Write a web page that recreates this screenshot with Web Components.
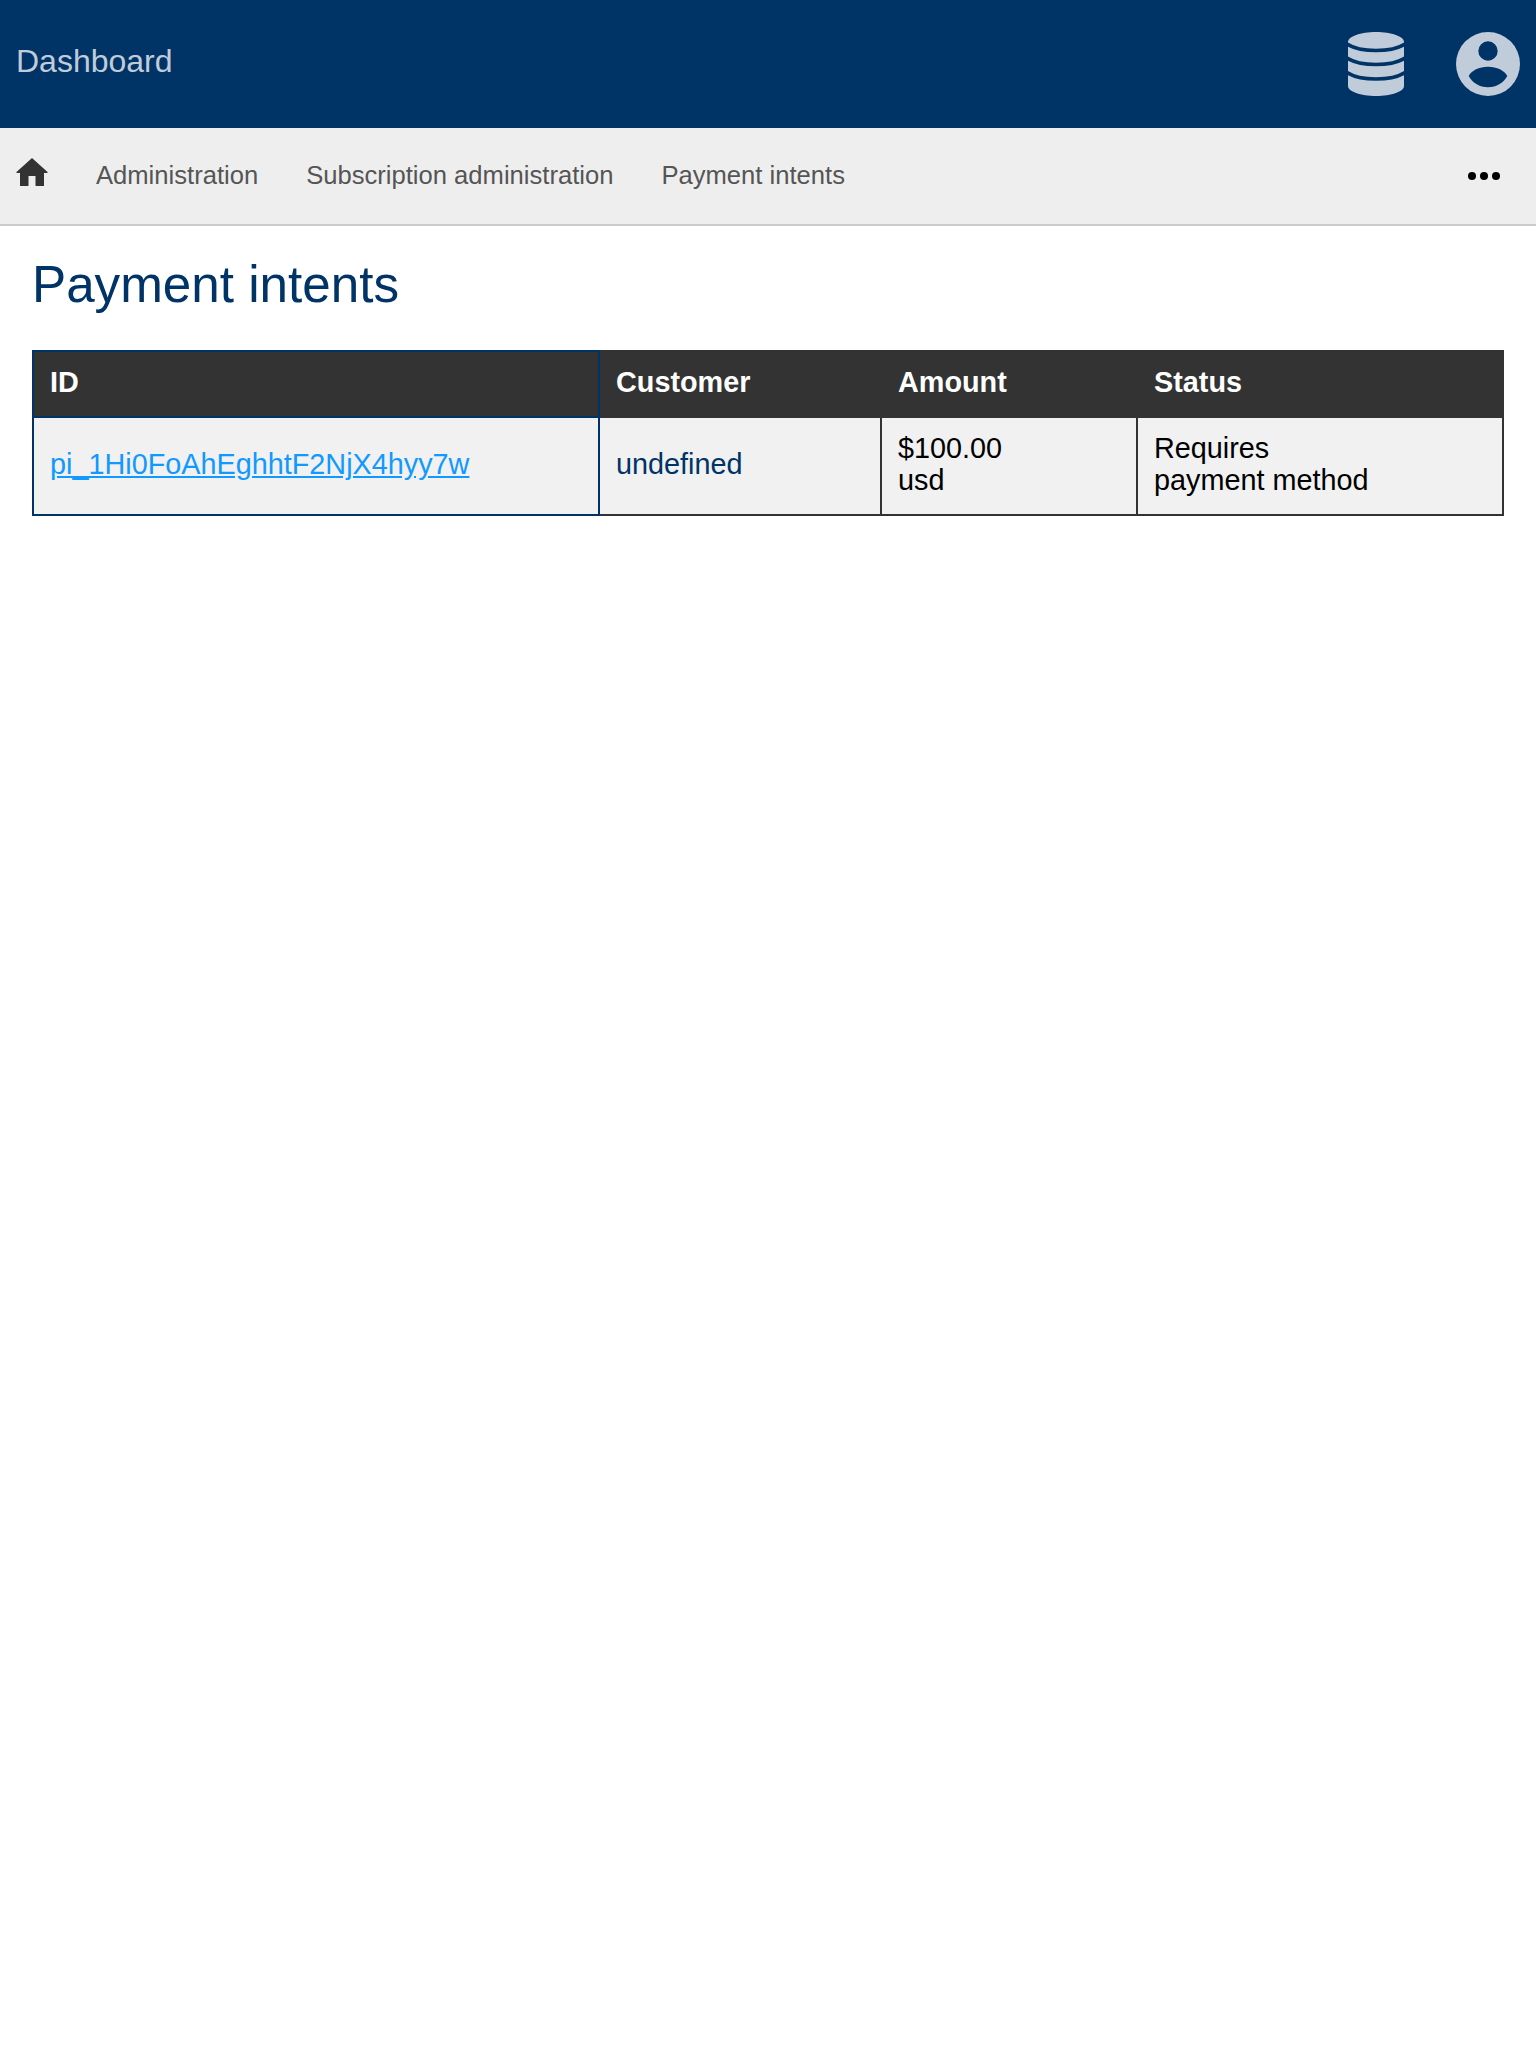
<!DOCTYPE html>
<html>
<head>
<meta charset="utf-8">
<title>Payment intents</title>
<style>
  html, body { margin: 0; padding: 0; background: #fff; font-family: "Liberation Sans", Arial, sans-serif; }
</style>
</head>
<body>
<app-header></app-header>
<app-nav></app-nav>
<payment-page></payment-page>

<script>
const headerTemplate = document.createElement('template');
headerTemplate.innerHTML = `
  <style>
    :host {
      display: flex;
      align-items: center;
      height: 128px;
      padding: 0 16px;
      box-sizing: border-box;
      background: #003366;
      color: #c0ccda;
    }
    .brand {
      flex: 1;
      font-size: 32px;
      margin-bottom: 5px;
    }
    svg { display: block; }
    .db { margin-right: 52px; }
    .db .bands { fill: none; stroke: #003366; stroke-width: 3.600; }
    .fill { fill: #c0ccd9; }
  </style>
  <div class="brand">Dashboard</div>
  <svg class="db" width="56" height="64" viewBox="0 0 56 64">
    <path class="fill" d="M0 10C0 4.500 12.500 0 28 0S56 4.500 56 10V54C56 59.500 43.500 64 28 64S0 59.500 0 54Z"/>
    <g class="bands">
      <path d="M-1 12C6 16.500 16 18.500 28 18.500S50 16.500 57 12"/>
      <path d="M-1 26C6 30.500 16 32.500 28 32.500S50 30.500 57 26"/>
      <path d="M-1 40.500C6 45 16 47 28 47S50 45 57 40.500"/>
    </g>
  </svg>
  <svg width="64" height="64" viewBox="0 0 64 64"><path class="fill" fill-rule="evenodd" d="M32 0a32 32 0 1 1 0 64a32 32 0 0 1 0-64zM32 9.300a9.700 9.700 0 1 0 0 19.400a9.700 9.700 0 1 0 0-19.400zM12.700 44C15.500 38.500 23 34.700 32 34.700S48.500 38.500 51.300 44C48 50.500 40.500 55.300 32 55.300S16 50.500 12.700 44Z"/></svg>
`;

class AppHeader extends HTMLElement {
  constructor() {
    super();
    this.attachShadow({ mode: 'open' });
    this.shadowRoot.appendChild(headerTemplate.content.cloneNode(true));
  }
}
window.customElements.define('app-header', AppHeader);

const navTemplate = document.createElement('template');
navTemplate.innerHTML = `
  <style>
    :host {
      display: flex;
      align-items: center;
      height: 98px;
      padding: 0 16px;
      box-sizing: border-box;
      background: #eeeeee;
      border-bottom: 2px solid #cccccc;
      color: #555555;
      font-size: 25.600px;
    }
    .home { display: block; fill: #333333; margin-right: 48px; margin-bottom: 8px; }
    a { color: inherit; text-decoration: none; margin-right: 48px; margin-bottom: 2px; }
    .more { display: block; margin-left: auto; margin-right: 20px; fill: #000; }
  </style>
  <svg class="home" width="32" height="28" viewBox="0 0 32 28"><path d="M16 0L31.500 14V15H28V28H19.500V18H12.500V28H4V15H.5V14Z"/></svg>
  <a>Administration</a>
  <a>Subscription administration</a>
  <a>Payment intents</a>
  <svg class="more" width="32" height="8" viewBox="0 0 32 8"><circle cx="4" cy="4" r="4"/><circle cx="16" cy="4" r="4"/><circle cx="28" cy="4" r="4"/></svg>
`;

class AppNav extends HTMLElement {
  constructor() {
    super();
    this.attachShadow({ mode: 'open' });
    this.shadowRoot.appendChild(navTemplate.content.cloneNode(true));
  }
}
window.customElements.define('app-nav', AppNav);

const pageTemplate = document.createElement('template');
pageTemplate.innerHTML = `
  <style>
    :host { display: block; padding: 0 32px; }
    h1 {
      margin: 0;
      padding: 31px 0 37px;
      font-size: 51.200px;
      line-height: 56px;
      font-weight: normal;
      color: #003366;
    }
    table {
      width: 100%;
      table-layout: fixed;
      border-collapse: collapse;
      font-size: 28.800px;
      line-height: 32px;
      color: #000;
    }
    th, td { padding: 14px 16px 18px; text-align: left; vertical-align: middle; border: 2px solid #333333; }
    th { background: #333333; color: #fff; font-weight: bold; }
    td { background: #f1f1f1; }
    .navy { border-color: #003366; }
    .navy-text { color: #003366; }
    a { color: #1199ff; }
  </style>
  <h1>Payment intents</h1>
  <table>
    <colgroup><col style="width:566px"><col style="width:282px"><col style="width:256px"><col style="width:366px"></colgroup>
    <tr>
      <th class="navy">ID</th>
      <th>Customer</th>
      <th>Amount</th>
      <th>Status</th>
    </tr>
    <tr>
      <td class="navy"><a href="#">pi_1Hi0FoAhEghhtF2NjX4hyy7w</a></td>
      <td class="navy-text">undefined</td>
      <td>$100.00<br>usd</td>
      <td>Requires<br>payment method</td>
    </tr>
  </table>
`;

class PaymentPage extends HTMLElement {
  constructor() {
    super();
    this.attachShadow({ mode: 'open' });
    this.shadowRoot.appendChild(pageTemplate.content.cloneNode(true));
  }
}
window.customElements.define('payment-page', PaymentPage);
</script>
</body>
</html>
